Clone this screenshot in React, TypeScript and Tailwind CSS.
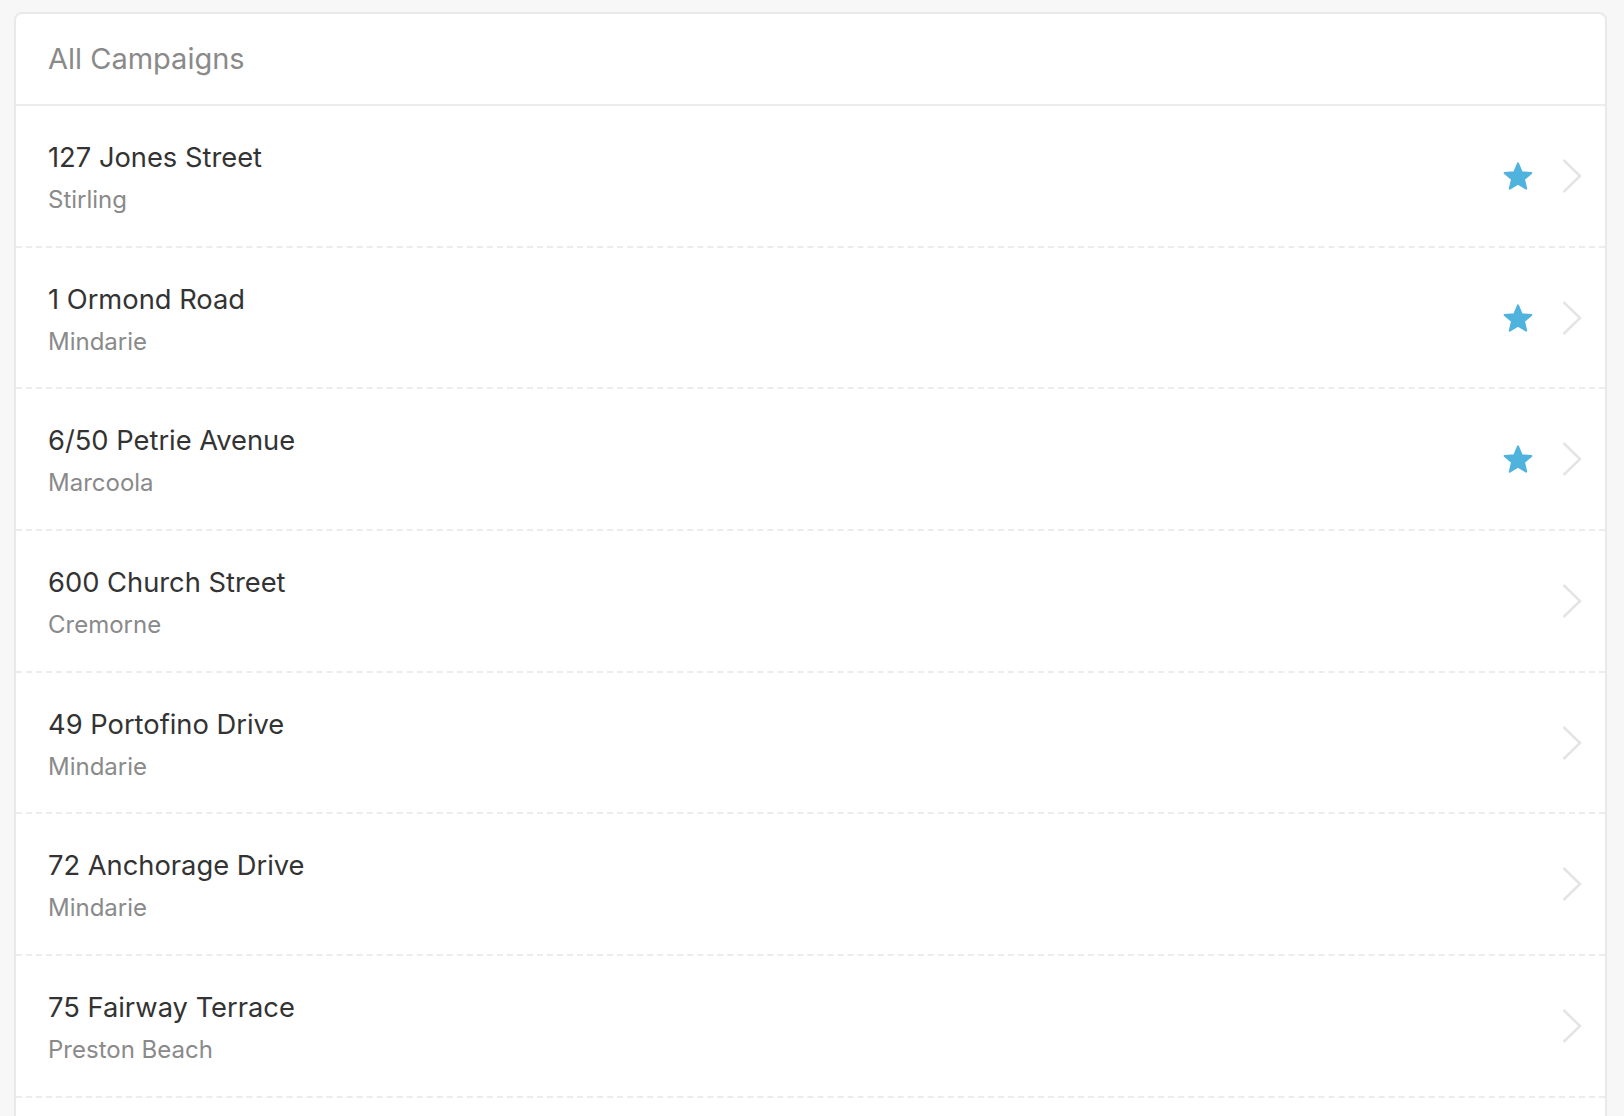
import React from 'react';

interface Campaign {
  address: string;
  suburb: string;
  starred: boolean;
}

const CAMPAIGNS: Campaign[] = [
  { address: '127 Jones Street', suburb: 'Stirling', starred: true },
  { address: '1 Ormond Road', suburb: 'Mindarie', starred: true },
  { address: '6/50 Petrie Avenue', suburb: 'Marcoola', starred: true },
  { address: '600 Church Street', suburb: 'Cremorne', starred: false },
  { address: '49 Portofino Drive', suburb: 'Mindarie', starred: false },
  { address: '72 Anchorage Drive', suburb: 'Mindarie', starred: false },
  { address: '75 Fairway Terrace', suburb: 'Preston Beach', starred: false },
];

function StarIcon() {
  return (
    <svg width="32" height="32" viewBox="0 0 32 32" className="shrink-0">
      <polygon
        points="16,3.3 19.7,12.2 29.32,12.97 21.99,19.25 24.23,28.63 16,23.6 7.77,28.63 10.01,19.25 2.68,12.97 12.3,12.2"
        fill="#4fb3de"
        stroke="#4fb3de"
        strokeWidth="2"
        strokeLinejoin="round"
      />
    </svg>
  );
}

function Chevron() {
  return (
    <svg width="22" height="36" viewBox="0 0 22 36" className="shrink-0">
      <polyline
        points="2.5,2 19,18 2.5,34"
        fill="none"
        stroke="#e4e4e4"
        strokeWidth="2.5"
      />
    </svg>
  );
}

export default function App() {
  return (
    <div
      className="h-[1116px] overflow-hidden bg-[#f7f7f7] pt-[12px] pl-[14px] pr-[17px]"
      style={{ fontFamily: 'Inter, "Noto Sans", sans-serif' }}
    >
      {/* card runs on past the bottom of the window */}
      <div className="min-h-[1140px] bg-white border-2 border-[#e9e9e9] rounded-[8px]">
        {/* Header */}
        <div className="h-[92px] flex items-center pl-[32px] border-b-2 border-[#ececec]">
          <h1 className="text-[29px] text-[#8a8a8a]">All Campaigns</h1>
        </div>

        {/* Rows */}
        {CAMPAIGNS.map((c) => (
          <div
            key={c.address}
            className="h-[141.7px] flex items-center justify-between pl-[32px] pr-[22px] border-b-2 border-dashed border-[#ececec]"
          >
            <div className="flex flex-col pt-[4px]">
              <span className="text-[27.3px] leading-[34px] text-[#333333]">{c.address}</span>
              <span className="text-[24px] leading-[30px] text-[#8a8a8a] mt-[10px]">{c.suburb}</span>
            </div>
            <div className="flex items-center gap-[27px]">
              {c.starred && <StarIcon />}
              <Chevron />
            </div>
          </div>
        ))}
      </div>
    </div>
  );
}
